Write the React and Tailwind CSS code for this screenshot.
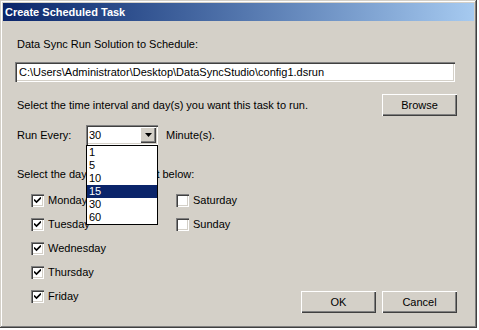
import React from 'react';

const raised = 'bg-[#d4d0c8] shadow-[inset_1px_1px_#ffffff,inset_-1px_-1px_#404040,inset_-2px_-2px_#808080]';
const sunken = 'shadow-[inset_1px_1px_#808080,inset_2px_2px_#404040,inset_-1px_-1px_#ffffff,inset_-2px_-2px_#d4d0c8]';

const Button = ({ label, className = '' }) => (
  <div className={`${raised} w-[75px] h-[22px] flex items-center justify-center text-black ${className}`}>
    {label}
  </div>
);

const CheckBox = ({ label, checked }) => (
  <div className="h-[24px] flex items-center">
    <div className={`w-[13px] h-[13px] bg-white ${sunken} flex items-center justify-center`}>
      {checked && (
        <svg width="7" height="7" viewBox="0 0 7 7">
          <path d="M0 2.5 L2.5 5 L7 0.5" stroke="#000" strokeWidth="1.6" fill="none" />
        </svg>
      )}
    </div>
    <span className="ml-[4px] text-black">{label}</span>
  </div>
);

const intervals = ['1', '5', '10', '15', '30', '60'];

export default function App() {
  return (
    <div className="w-[479px] h-[330px] bg-white overflow-hidden text-[11px] leading-[13px] font-['Liberation_Sans',Arial,sans-serif]">
      <div className="w-[477px] h-[328px] bg-[#d4d0c8] shadow-[inset_-1px_-1px_#404040,inset_1px_1px_#d4d0c8,inset_-2px_-2px_#808080,inset_2px_2px_#ffffff] p-[3px] flex flex-col">
        {/* Title bar */}
        <div className="h-[18px] bg-gradient-to-r from-[#0a246a] to-[#a6caf0] text-white font-bold pl-[2px] flex items-center">
          Create Scheduled Task
        </div>

        <div className="flex-1 flex flex-col pl-[12px] pr-[17px]">
          <div className="mt-[17px] ml-[2px]">Data Sync Run Solution to Schedule:</div>

          <div className={`mt-[11px] mr-[2px] h-[20px] bg-white ${sunken} flex items-center pl-[4px]`}>
            C:\Users\Administrator\Desktop\DataSyncStudio\config1.dsrun
          </div>

          <div className="mt-[12px] flex items-center justify-between">
            <span className="ml-[2px]">Select the time interval and day(s) you want this task to run.</span>
            <Button label="Browse" />
          </div>

          <div className="mt-[9px] flex items-center">
            <span className="ml-[2px] w-[69px]">Run Every:</span>
            <div className="relative">
              <div className={`w-[72px] h-[20px] bg-white ${sunken} flex items-center pl-[3px] pr-[2px]`}>
                <span className="flex-1">30</span>
                <div className={`${raised} w-[16px] h-[16px] flex items-center justify-center`}>
                  <svg width="7" height="4" viewBox="0 0 7 4">
                    <path d="M0 0 H7 L3.5 4 Z" fill="#000" />
                  </svg>
                </div>
              </div>
              <div className="absolute left-0 top-[20px] w-[72px] bg-white border border-black z-10">
                {intervals.map(v => (
                  <div
                    key={v}
                    className={`h-[13px] leading-[13px] pl-[2px] ${v === '15' ? 'bg-[#0a246a] text-white' : 'text-black'}`}
                  >
                    {v}
                  </div>
                ))}
              </div>
            </div>
            <span className="ml-[8px]">Minute(s).</span>
          </div>

          <div className="mt-[23px] ml-[2px]">Select the day(s) from the list below:</div>

          <div className="flex flex-1 mt-[7px]">
            <div className="grid grid-cols-[145px_auto] self-start ml-[16px]">
              <CheckBox label="Monday" checked />
              <CheckBox label="Saturday" />
              <CheckBox label="Tuesday" checked />
              <CheckBox label="Sunday" />
              <CheckBox label="Wednesday" checked />
              <div />
              <CheckBox label="Thursday" checked />
              <div />
              <CheckBox label="Friday" checked />
            </div>
            <div className="ml-auto self-end flex gap-[6px] mb-[12px]">
              <Button label="OK" />
              <Button label="Cancel" />
            </div>
          </div>
        </div>
      </div>
    </div>
  );
}
